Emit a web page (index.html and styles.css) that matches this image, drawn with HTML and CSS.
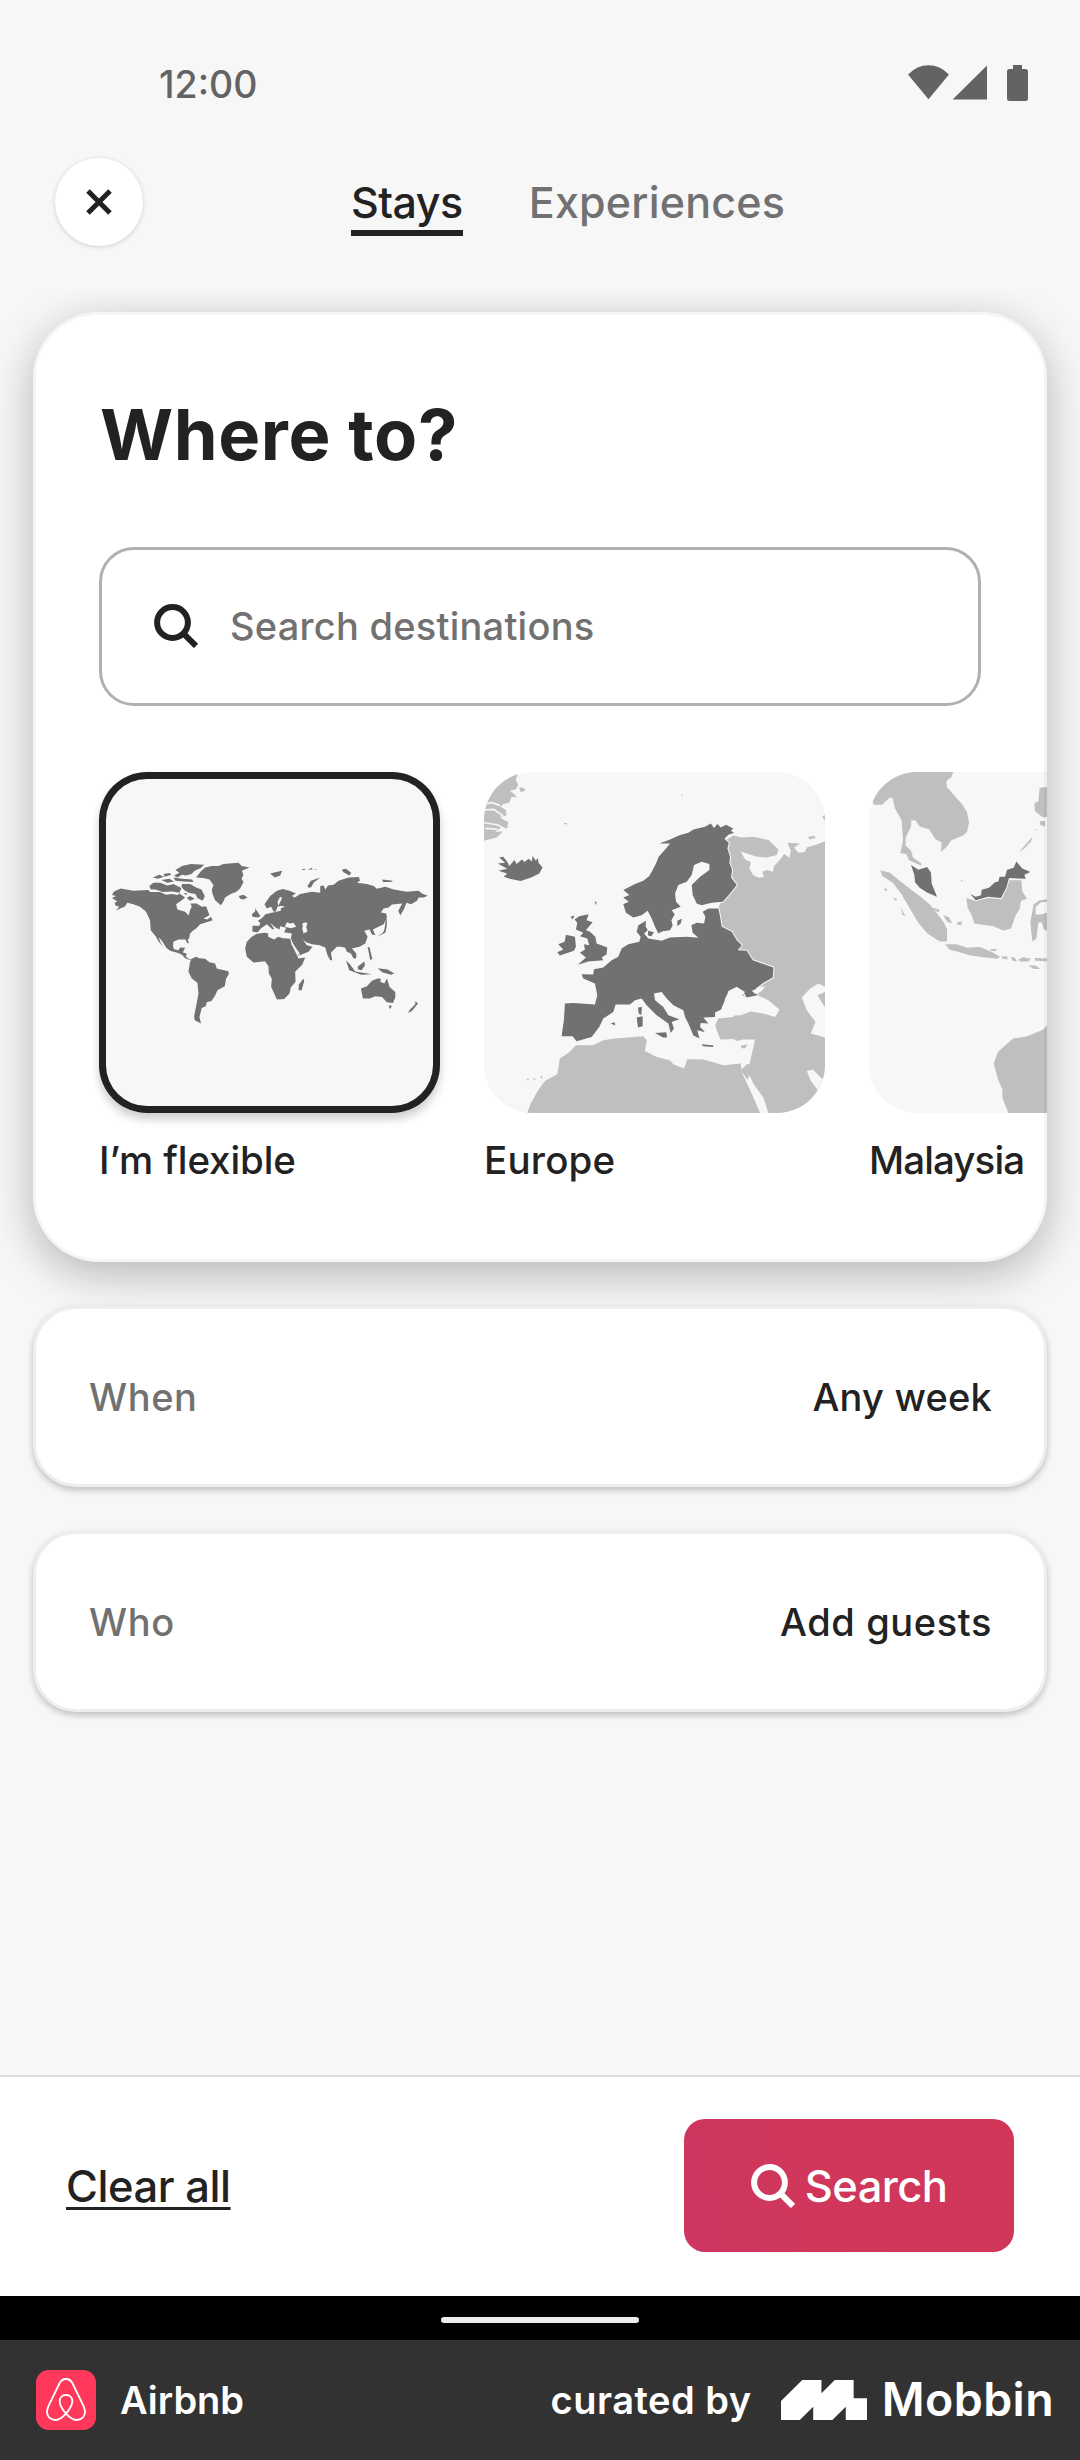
FILE: index.html
```html
<!DOCTYPE html>
<html lang="en">
<head>
<meta charset="utf-8">
<title>Where to?</title>
<link rel="stylesheet" href="styles.css">
</head>
<body>
<div class="screen">
  <div class="status">
    <span class="clock">12:00</span>
    <svg class="status-icons" viewBox="0 0 120 36" aria-hidden="true">
      <path d="M0 9.5Q9 .3 20.5 .3T41 9.5L20.5 34.3z"/>
      <path d="M44.6 34.6L79 .6v34z"/>
      <path d="M105 0h9v4h3.500q2.500 0 2.500 2.500v27q0 2.500-2.500 2.500h-16q-2.500 0-2.500-2.500v-27q0-2.500 2.500-2.500h3.500z"/>
    </svg>
  </div>

  <header class="header">
    <button class="close" aria-label="Close">
      <svg viewBox="0 0 26 26"><path d="M2 2l22 22M24 2L2 24"/></svg>
    </button>
    <nav class="tabs">
      <a class="tab active">Stays</a>
      <a class="tab">Experiences</a>
    </nav>
  </header>

  <main class="main">
    <section class="card">
      <h1 class="title">Where to?</h1>
      <div class="field">
        <svg class="search-icon" viewBox="0 0 44 44"><circle cx="18.500" cy="18.500" r="15.400"/><path d="M29.300 29.300L42 42"/></svg>
        <span class="placeholder">Search destinations</span>
      </div>
      <div class="carousel">
        <figure class="place">
          <svg class="map selected" viewBox="27 36 1022 1022">
            <g class="focus rough">
              <path d="M66 405L72 394 92 385 130 392 175 390 180 396 210 396 228 404 245 402 262 405 268 400 285 412 275 420 258 432 262 448 285 455 296 466 299 452 305 440 301 430 320 430 335 440 348 438 358 465 340 475 352 478 362 470 368 480 345 488 330 492 318 505 309 511 300 520 297 535 293 537 297 550 291 548 286 538 265 538 250 545 249 560 252 567 265 570 270 562 285 563 278 577 290 580 287 590 300 598 312 595 306 602 285 594 276 584 262 578 240 572 228 562 215 541 205 531 212 548 219 560 205 543 197 528 182 510 180 480 168 455 150 440 130 432 112 428 104 440 92 444 78 451 88 440 76 436 74 428 82 424 66 414 78 408z"/>
              <path d="M178 378l12-10 20 0 22 8 18-4 24 12-6 14-22-4-28 2-22-8-14 0zM188 352l20-8 14 6-18 6zM214 360l24-4 14 8-20 4zM220 342l18-3 6 5-20 6zM256 330l20-12 26-6 40 2-10 10-18 8-10 10-16 4-12-2-14 8-10-6 16-8zM250 352l26 4 30 2 4 8-30-2-24-2zM276 372l24 0 18 10 16 6 10 20-6 14-16-8-6-12-20-4-14-8-8-10zM290 414l10-6 14 8-14 6zM280 402l8-4 4 6z"/>
              <path d="M318 352L332 334 345 322 365 318 385 318 400 312 445 308 455 318 478 322 455 332 460 345 454 355 460 366 450 385 438 396 425 400 412 408 405 412 398 428 392 435 375 420 368 404 365 390 370 375 358 358 340 354zM446 408l14-4 12 8-12 6-10-2z"/>
              <path d="M300 605L305 596 318 590 328 594 345 596 358 606 375 610 380 625 395 629 415 633 416 642 408 655 404 678 382 690 375 706 364 722 350 726 347 738 335 743 328 770 333 790 314 780 312 768 318 738 325 700 322 668 305 655 295 635z"/>
              <path d="M485 530L500 521 525 518 534 520 534 530 552 538 564 530 578 534 600 536 612 568 625 595 645 592 636 614 615 635 616 665 602 682 598 700 582 716 560 718 552 700 543 680 545 656 536 640 535 618 524 603 490 607 470 590 465 565 470 545zM640 655l2 8-8 28-9-2 1-16z"/>
              <path d="M487 497L508 497 510 488 503 482 515 474 526 462 545 458 558 455 572 452 572 444 585 440 572 437 563 440 576 414 570 410 562 425 564 436 556 455 550 454 543 440 530 445 523 432 540 408 560 392 578 387 600 393 617 400 605 408 614 412 630 402 665 395 690 398 690 378 700 376 706 388 713 376 730 374 745 362 775 352 806 351 809 362 800 368 830 372 850 378 860 386 885 380 910 388 950 395 985 392 995 400 1012 407 1000 412 985 412 980 422 962 432 948 428 942 445 930 466 924 452 936 430 905 433 895 442 880 445 872 457 888 460 890 472 880 492 860 502 848 508 855 525 845 523 838 508 822 512 832 530 825 550 808 560 785 565 798 580 798 594 790 595 782 580 770 575 765 563 752 560 740 560 722 578 726 600 720 600 712 585 705 562 688 555 665 552 648 546 638 539 650 555 667 560 655 575 625 587 612 560 602 535 605 520 582 516 588 503 570 498 568 508 556 502 540 488 552 506 547 508 530 492 512 505 503 516 487 515z"/>
              <path d="M485 462l10-8 0-10 8 12 8 12-8 4-16-2zM540 340l18-4 18-4-6 14-16 6zM652 378l10-16 28-10-20 16-6 12-8 4zM755 328l12-2 16 12-6 8-18-10zM876 358l32 4-6 4-24 0zM886 480l4-4-1 25-4 17-25 12 18-12 5-12zM767 600l12 12 16 22 50 8-32 2-36-14zM802 620l20-16 2 12-10 14-10-2zM832 560l8 40 6-4-8-34zM862 624l30 4 20 12-10 4-26-8z"/>
              <path d="M632 330l10-4 4 4zM652 328l12-4 4 4zM670 328l12 0-6 2z"/>
              <path d="M812 685L830 678 845 662 862 655 872 656 870 665 882 670 890 655 898 680 915 695 915 712 908 728 890 726 875 710 855 708 838 715 818 715zM895 735l10 2-6 10zM975 722l8 8-18 22-12 6 6-10 16-16z"/>
            </g>
            <g class="sea"><path d="M584 500l6-14 10 4 10-2 8 12-16 4zM636 490l10-4 6 4-4 10 4 14-12 6-4-14 2-8zM600 532l8 18 22 32-6 2-20-30z"/></g>
          </svg>
          <figcaption class="label flexible">I’m flexible</figcaption>
        </figure>
        <figure class="place">
          <svg class="map" viewBox="42.500 36 1022 1022">
            <g class="land rough">
              <path d="M42 36H145L138 60 145 75 138 88 120 92 130 100 142 112 125 110 118 128 100 132 92 140 108 150 110 166 90 170 100 178 115 186 112 205 92 204 75 215 100 214 80 232 42 242z"/>
              <path d="M148 82l14 2 4 8-14 4zM1056 170l9-6v20zM1014 230l20-2 2 6-18 4z"/>
              <path d="M768 240L790 226 815 232 850 230 895 240 925 268 920 285 890 292 860 290 830 280 812 275 825 298 842 306 838 325 850 346 868 353 882 350 876 335 892 330 908 335 912 318 930 298 942 282 958 293 962 272 952 248 990 250 972 262 985 278 1004 276 1010 262 1035 255 1065 243V1058H895L880 1012 850 970 838 945 832 958 812 930 830 912 838 912 855 838 818 838 800 842 790 836 750 838 735 795 745 775 790 770 800 700 870 688 700 560 750 430 795 378 780 330z"/>
              <path d="M172 1058L182 1030 205 990 225 962 262 942 270 895 298 876 318 855 370 855 400 840 435 835 520 828 530 840 525 872 560 890 600 900 610 912 642 925 652 897 700 898 760 915 812 910 815 935 845 1000 870 1058z"/>
            </g>
            <g class="focus edged rough">
              <path d="M568 250L600 238 630 225 655 218 670 208 705 200 722 190 732 204 742 192 752 202 768 194 790 206 782 212 792 218 775 224 763 236 776 248 772 265 780 290 778 308 786 330 783 352 800 375 780 400 758 425 725 428 695 435 680 430 668 405 665 375 690 350 718 330 718 312 695 305 672 315 665 345 650 365 625 375 615 400 618 425 632 440 605 450 614 462 604 480 608 495 600 510 578 513 565 520 555 500 545 475 533 452 515 465 490 472 468 458 460 432 476 425 460 412 478 405 460 390 495 372 520 362 538 348 548 330 558 310 566 290 588 265 600 250z"/>
              <path d="M285 730L310 728 375 733 382 705 375 670 340 655 335 642 370 643 372 627 400 622 425 600 445 590 455 565 475 552 508 545 512 530 500 515 505 495 528 482 527 500 534 510 522 520 535 535 575 542 600 532 650 530 685 533 668 518 664 495 680 488 702 490 706 470 698 455 715 445 745 445 750 470 755 500 785 515 800 540 815 555 803 570 830 572 848 600 910 622 908 652 880 668 858 684 862 705 830 712 820 695 800 680 780 690 765 715 760 745 735 757 735 770 700 772 715 790 692 788 690 800 705 815 682 810 688 835 670 826 655 790 645 770 640 750 610 735 590 715 575 695 552 700 555 720 580 740 595 765 628 777 605 785 612 805 602 818 595 790 560 765 530 735 515 715 495 720 480 733 437 733 430 755 400 775 388 800 365 830 320 843 308 828 275 828 282 780z"/>
              <path d="M555 818l34-2 2 16-12 0zM500 772l18-4 0 30-14 4zM504 742l12-2-2 24-8-4zM695 852l36 4-2 4-30-2zM422 790l12-4 2 10zM534 512l18 4-8 12-10-2zM622 482l14-6-4 14-10 8z"/>
              <path d="M328 468L356 462 350 480 368 486 348 510 360 515 376 530 380 550 412 562 410 582 395 592 400 600 355 604 324 614 348 592 330 578 345 568 342 552 358 555 352 535 330 528 340 518 318 508 322 488 314 478zM288 524L315 530 318 560 312 572 270 586 262 576 280 568 265 552 284 545zM374 425l6 0-2 10zM302 470l12-4-6 12z"/>
              <path d="M88 292L100 290 112 305 118 318 134 300 140 312 156 298 164 306 176 296 186 304 188 288 198 302 204 294 206 308 218 322 208 340 184 352 152 363 120 356 102 350 112 340 86 332 112 326 84 310 106 308z"/>
            </g>
            <g class="sea rough">
              <path d="M750 768L755 742 766 718 775 692 800 680 825 695 815 705 832 714 865 706 895 720 928 748 915 770 880 760 842 754 812 765zM845 692l24-12 16-2-10 14-18 10z"/>
              <path d="M995 712L1020 685 1045 670 1065 680V695L1042 705 1060 735 1065 740V832L1022 820 1036 785 1010 750zM1010 932l18-4 20 20 16 14-4 18-12 16-26-34z"/>
              <path d="M725 775l14 6-6 20 10 20 8 14-22-8-14-20z"/>
            </g>
            <g class="land"><path d="M812 856l20-4-6 12-12 0zM170 954l10 4-8 2zM188 956l8-4 0 8zM210 950l6-4 2 10zM632 104l6 0-2 6zM280 190l12-2-2 6z"/></g>
            <path class="rift" d="M42 132l24-4 24 8M42 188l40 6 28 14M46 205l36 2M42 150l30-2 28 20"/>
          </svg>
          <figcaption class="label europe">Europe</figcaption>
        </figure>
        <figure class="place">
          <svg class="map" viewBox="88 64 1023 990" preserveAspectRatio="none">
            <g class="land rough">
              <path d="M88 64H340L336 78 320 90 322 108 340 128 368 158 382 180 388 210 382 238 370 248 335 262 322 280 304 296 306 268 288 260 268 230 240 222 228 205 215 204 214 222 198 255 198 278 214 292 220 312 244 328 246 336 230 330 208 320 200 302 182 300 190 262 186 205 166 170 158 138 148 140 128 158 104 160 88 130z"/>
              <path d="M122 350L150 356 180 380 210 402 240 424 270 448 300 484 312 500 322 520 322 556 300 556 262 532 236 502 214 466 186 420 160 386 128 366zM316 564L350 564 382 574 420 572 455 586 480 600 475 606 430 602 390 596 355 586 330 580zM310 480l18 6 10 18-16-6zM352 500l14-2 0 10-12 0zM485 600l18 0 0 8-14-2zM514 602l10 0 8 12-14-2zM535 610l14-8 24 4-6 8-24 0zM585 604l48 2v8l-46-2zM566 626l22 0 14 10-20 0zM452 578l22 0-8 6-12 0zM270 456l30 8-4 8zM132 400l12 6-6 4zM160 428l14 6-8 4zM184 454l8 20 8 10-12-6z"/>
              <path d="M380 430L408 438 445 430 486 432 508 378 545 378 548 410 562 432 544 438 540 462 528 480 514 518 490 524 462 512 404 504 396 480 384 458zM572 500L582 448 600 436 640 432 640 440 604 442 588 456 588 478 604 478 630 470 630 530 612 520 606 500 596 502 590 548 578 556z"/>
              <path d="M600 110L640 105V190L610 196 586 178 584 154 596 150zM600 206l16 0 0 16-14-4zM538 296l22-24 18-20-4 14-20 20zM362 378l6 0 0 6zM588 230l4 0-4 6z"/>
              <path d="M640 780L610 812 560 832 520 838 475 876 462 910 476 960 488 984 488 1010 506 1054H640z"/>
            </g>
            <g class="focus edged">
              <path d="M214 334L236 348 262 340 274 356 276 388 292 426 262 414 240 400 226 384 224 362zM392 418L408 426 424 422 426 406 448 400 466 384 476 382 480 368 496 368 502 348 522 342 530 324 548 344 572 354 554 362 558 374 508 372 500 400 484 430 445 426 408 436z"/>
            </g>
          </svg>
          <figcaption class="label malaysia">Malaysia</figcaption>
        </figure>
      </div>
    </section>

    <div class="row"><span class="row-name">When</span><span class="row-value">Any week</span></div>
    <div class="row"><span class="row-name">Who</span><span class="row-value guests">Add guests</span></div>
  </main>

  <footer class="actions">
    <a class="clear">Clear all</a>
    <button class="search-button">
      <svg class="search-icon" viewBox="0 0 44 44"><circle cx="18.500" cy="18.500" r="15.400"/><path d="M29.300 29.300L42 42"/></svg>
      <span>Search</span>
    </button>
  </footer>
  <div class="gesture"><span class="pill"></span></div>
  <div class="brand">
    <svg class="app-icon" viewBox="48 90 180 180" aria-hidden="true">
      <rect x="48" y="90" width="180" height="180" rx="38"/>
      <path d="M138 221C126 207 119 196 119 184C119 173 126 165 138 165C150 165 157 173 157 184C157 196 150 207 138 221C127 233 117 240 106 240C91 240 81 229 81 215C81 209 83 204 86 197L119 129C124 120 129 117 138 117C147 117 152 120 157 129L190 197C193 204 195 209 195 215C195 229 185 240 170 240C159 240 149 233 138 221z"/>
    </svg>
    <span class="app-name">Airbnb</span>
    <span class="curated">curated by</span>
    <svg class="mark" viewBox="697 960 251 120" preserveAspectRatio="none" aria-hidden="true">
      <path d="M697 1023L759 960H815V1000L854 960H909V1015H948V1080H886V1040L847 1080H791V1040L752 1080H697z"/>
    </svg>
    <span class="wordmark">Mobbin</span>
  </div>
</div>
</body>
</html>
```
FILE: styles.css
```css
* { box-sizing: border-box; }
body { margin: 0; background: #f7f7f7; color: #222; font-family: Inter, "Liberation Sans", sans-serif; font-weight: 500; }
button { font: inherit; border: 0; padding: 0; }
svg { display: block; flex: none; }

.screen { width: 1080px; height: 2460px; display: flex; flex-direction: column; overflow: hidden; }

.status { display: flex; justify-content: space-between; align-items: flex-start; height: 158px; padding: 60px 52px 0 159px; color: #636363; }
.clock { font-size: 37.5px; line-height: 49px; }
.status-icons { width: 120px; height: 36px; margin-top: 5px; fill: #636363; }

.header { display: flex; align-items: flex-start; height: 132px; padding-left: 55px; }
.close { width: 88px; height: 88px; border-radius: 50%; background: #fff; box-shadow: 0 1px 5px rgba(0, 0, 0, .16); display: flex; align-items: center; justify-content: center; }
.close svg { width: 26px; height: 26px; stroke: #222; stroke-width: 5; fill: none; }
.tabs { display: flex; gap: 66px; margin: 17px 0 0 208px; }
.tab { font-size: 43px; line-height: 55px; letter-spacing: .2px; color: #717171; border-bottom: 6px solid transparent; }
.tab.active { color: #222; letter-spacing: -.5px; border-color: #222; }

.main { flex: 1; overflow: hidden; padding: 22px 33px 0; }

.card { position: relative; height: 950px; padding: 80px 0 0 66px; border-radius: 66px; background: #fff; box-shadow: 0 12px 46px rgba(0, 0, 0, .27); overflow: hidden; }
.card::after { content: ""; position: absolute; inset: 0; border: 3px solid rgba(0, 0, 0, .04); border-radius: inherit; }
.title { margin: 0 0 0 1px; font-size: 70.500px; font-weight: 700; line-height: 85px; letter-spacing: .6px; }
.field { display: flex; align-items: center; width: 882px; height: 159px; margin-top: 70px; padding: 0 0 2px 52px; border: 3px solid #b0b0b0; border-radius: 35px; }
.search-icon { width: 44px; height: 44px; fill: none; stroke: currentColor; stroke-width: 6; }
.placeholder { margin-left: 32px; font-size: 38px; letter-spacing: .25px; color: #717171; }

.carousel { display: flex; gap: 44px; margin-top: 66px; }
.place { flex: none; width: 341px; margin: 0; }
.map { width: 341px; height: 341px; border-radius: 48px; background: #f7f7f7; }
.map.selected { box-shadow: inset 0 0 0 7px #222, 0 6px 10px rgba(0, 0, 0, .2); }
.focus { fill: #717171; }
.land { fill: #bfbfbf; }
.sea { fill: #f7f7f7; }
.edged { stroke: #f7f7f7; stroke-width: 6; paint-order: stroke; }
.rough { stroke-linejoin: bevel; }
.rift { fill: none; stroke: #f7f7f7; stroke-width: 5; }
.label { margin-top: 22px; font-size: 38.500px; line-height: 50px; }
.flexible { letter-spacing: -.1px; }
.europe { letter-spacing: .2px; }
.malaysia { letter-spacing: -.9px; }

.row { display: flex; align-items: center; justify-content: space-between; height: 181px; margin-top: 44px; padding: 0 52px 0 53px; border: 3px solid #eee; border-radius: 43px; background: #fff; box-shadow: 0 3px 7px rgba(0, 0, 0, .24); position: relative; font-size: 38px; letter-spacing: .2px; }
.row-name { color: #717171; letter-spacing: .6px; }
.guests { letter-spacing: .6px; }

.actions { display: flex; align-items: center; justify-content: space-between; height: 221px; padding: 0 66px 2px; border-top: 2px solid #ddd; background: #fff; font-size: 43.500px; }
.clear { letter-spacing: -.45px; text-decoration: underline; text-decoration-thickness: 3px; text-underline-offset: 5px; text-decoration-skip-ink: none; }
.search-button { display: flex; align-items: center; justify-content: center; gap: 10px; width: 330px; height: 133px; border-radius: 21px; background: linear-gradient(75deg, #ce3560, #d0375b 35%, #d13658); color: #fff; letter-spacing: -.6px; }

.gesture { display: flex; justify-content: center; height: 44px; padding-top: 21px; background: #000; }
.pill { width: 198px; height: 6px; border-radius: 3px; background: #eee; }

.brand { display: flex; align-items: center; height: 120px; padding: 0 26px 0 36px; background: #323232; color: #fff; font-size: 38px; font-weight: 600; }
.app-icon { width: 60px; height: 60px; }
.app-icon rect { fill: #ff385c; }
.app-icon path { fill: none; stroke: #fff; stroke-width: 5.500; }
.app-name { margin-left: 24px; }
.curated { margin-left: auto; letter-spacing: .5px; }
.mark { width: 86px; height: 40px; margin-left: 29px; fill: #fff; }
.wordmark { margin: -2px 0 0 15px; font-size: 46.500px; letter-spacing: .4px; }
```
